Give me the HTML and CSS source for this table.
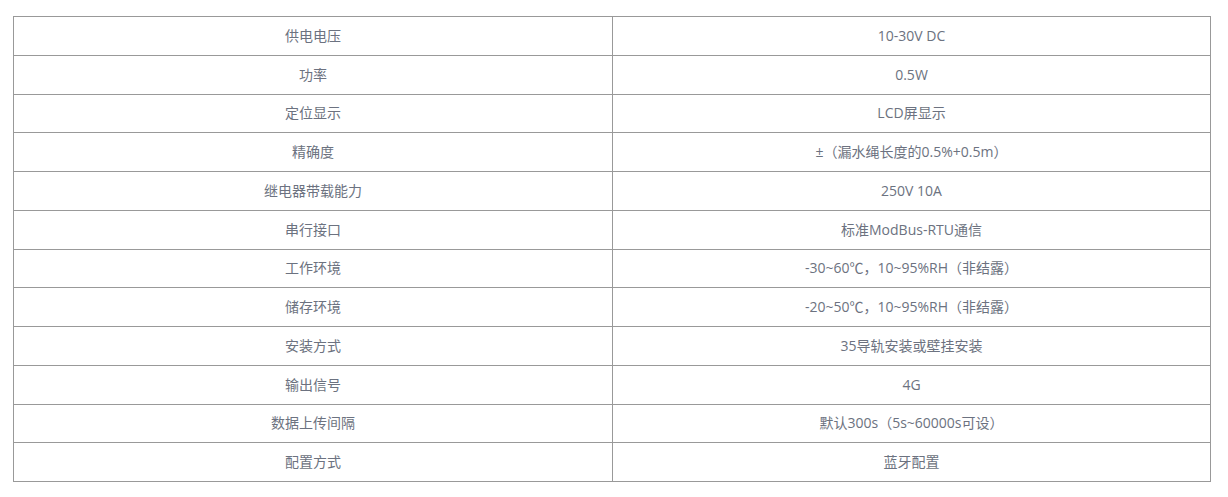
FILE: index.html
```html
<!DOCTYPE html>
<html lang="zh-CN">
<head>
<meta charset="utf-8">
<title>参数</title>
<link rel="stylesheet" href="styles.css">
</head>
<body>
<div class="wrap">
<table class="spec">
<tbody>
<tr><td>供电电压</td><td>10-30V DC</td></tr>
<tr><td>功率</td><td>0.5W</td></tr>
<tr><td>定位显示</td><td>LCD屏显示</td></tr>
<tr><td>精确度</td><td>±（漏水绳长度的0.5%+0.5m）</td></tr>
<tr><td>继电器带载能力</td><td>250V 10A</td></tr>
<tr><td>串行接口</td><td>标准ModBus-RTU通信</td></tr>
<tr><td>工作环境</td><td>-30~60℃，10~95%RH（非结露）</td></tr>
<tr><td>储存环境</td><td>-20~50℃，10~95%RH（非结露）</td></tr>
<tr><td>安装方式</td><td>35导轨安装或壁挂安装</td></tr>
<tr><td>输出信号</td><td>4G</td></tr>
<tr><td>数据上传间隔</td><td>默认300s（5s~60000s可设）</td></tr>
<tr><td>配置方式</td><td>蓝牙配置</td></tr>
</tbody>
</table>
</div>
</body>
</html>
```
FILE: styles.css
```css
html, body {
  margin: 0;
  padding: 0;
  background: #fff;
}
.wrap {
  padding: 16px 0 0 13px;
}
.spec {
  width: 1198px;
  border-collapse: collapse;
  table-layout: fixed;
  font-family: "Open Sans", "Noto Sans CJK SC", sans-serif;
  font-size: 14px;
  color: #6c7280;
}
.spec td {
  border: 1px solid #999;
  height: 37.75px;
  padding: 0;
  text-align: center;
  vertical-align: middle;
  line-height: 20px;
}
.spec td:first-child {
  width: 598px;
}
```
